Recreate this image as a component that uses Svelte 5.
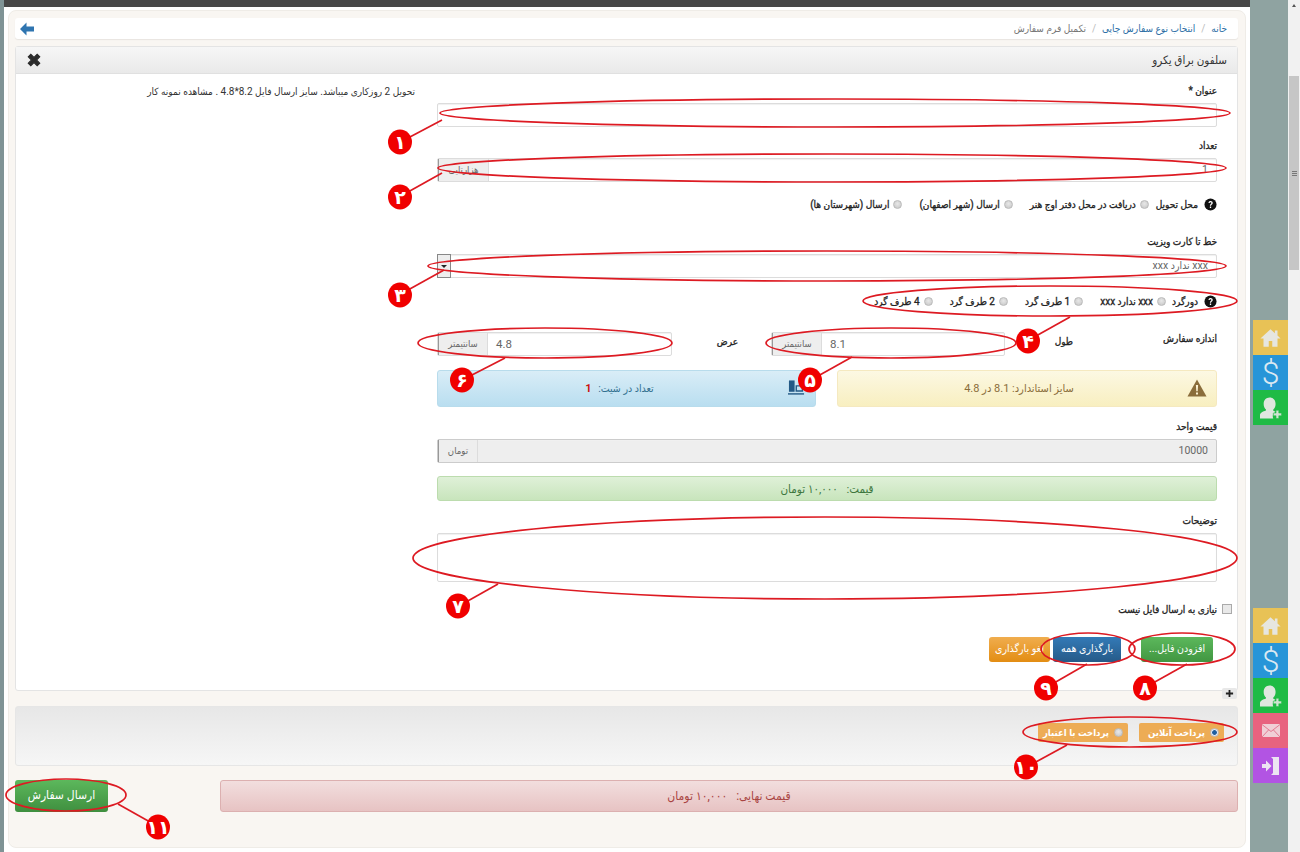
<script>
  const ellipses = [
    [835, 113, 395, 14], [832, 168, 394, 14], [827, 266, 399, 15], [1050, 301, 187, 15],
    [891, 343, 125, 15], [545, 343, 127, 15], [825, 558, 412, 41], [1182, 649, 53, 16],
    [1088, 649, 47, 16], [1130, 732, 107, 15], [66, 795, 60, 16]
  ];
  const lines = [
    [442, 120, 408, 138], [442, 173, 408, 192], [444, 270, 408, 290], [1070, 317, 1036, 336],
    [852, 357, 818, 376], [505, 358, 470, 376], [498, 584, 466, 602], [1187, 664, 1153, 683],
    [1087, 664, 1054, 683], [1067, 745, 1034, 763], [118, 804, 150, 822]
  ];
  const markers = [
    [400, 142, '۱'], [400, 197, '۲'], [400, 295, '۳'], [1028, 341, '۴'], [810, 380, '۵'], [462, 380, '۶'],
    [458, 606, '۷'], [1145, 688, '۸'], [1046, 688, '۹'], [1026, 767, '۱۰'], [158, 827, '۱۱']
  ];
  const edgeRounds = ['دورگرد', 'xxx ندارد xxx', '1 طرف گرد', '2 طرف گرد', '4 طرف گرد'];
  const delivery = ['دریافت در محل دفتر اوج هنر', 'ارسال (شهر اصفهان)', 'ارسال (شهرستان ها)'];
</script>

{#snippet homeIcon()}
  <svg class="tile-icon home" viewBox="0 0 24 24"><path d="M12 2.500 0.500 13H4v9.500h6V16h4v6.500h6V13h3.500L20 9.800V4h-3v3z" fill="#e6e6e0" /></svg>
{/snippet}
{#snippet dollarTile()}
  <span class="tile dollar">$</span>
{/snippet}
{#snippet userTile()}
  <span class="tile green-tile">
    <svg class="tile-icon" viewBox="0 0 24 24">
      <path d="M10.500 0.500c4 0 6.500 3 6.500 7 0 2.500-1 4.700-2.500 6v1.500l2.500 1.200A5.500 5.500 0 0 0 14.500 23.500H0v-4c0-2.200 3.200-3.600 6.500-4.800v-1.200C5 12.200 4 10 4 7.500c0-4 2.500-7 6.500-7z" fill="#dfe7df" />
      <path d="M17.500 14.500h3v3h3v3h-3v3h-3v-3h-3v-3h3z" fill="#cfe3d2" stroke="#1fbb45" stroke-width=".6" />
    </svg>
  </span>
{/snippet}

<div class="page">
  <div class="edge"></div>

  <div class="main">
    <div class="topbar"></div>
    <div class="card">
      <nav class="crumbs">
        <span class="link">خانه</span><span class="sep">/</span>
        <span class="link">انتخاب نوع سفارش چاپی</span><span class="sep">/</span>
        <span class="current">تکمیل فرم سفارش</span>
        <svg class="back" viewBox="0 0 16 14"><path d="M7.500 0.500 1 7l6.500 6.500V9.500H15v-5H7.500z" fill="#2f75b0" /></svg>
      </nav>

      <section class="panel">
        <header class="panel-head">
          <span>سلفون براق یکرو</span>
          <svg class="close" viewBox="0 0 14 14"><path d="M2 4.200 4.200 2 7 4.800 9.800 2 12 4.200 9.200 7 12 9.800 9.800 12 7 9.200 4.200 12 2 9.800 4.800 7z" fill="#2b2b2b" stroke="#2b2b2b" /></svg>
        </header>

        <div class="panel-body">
          <form class="form">
            <div class="label">عنوان *</div>
            <div class="input"></div>

            <div class="label gap-12">تعداد</div>
            <div class="input group">
              <span class="value">1</span>
              <span class="addon wide">هزارتایی</span>
            </div>

            <div class="radios first">
              <svg class="help" viewBox="0 0 14 14"><circle cx="7" cy="7" r="6.500" fill="#111" /><path d="M4.800 5.300C5 3.900 6 3.300 7.100 3.300c1.300 0 2.300.8 2.300 2 0 1.600-1.800 1.600-1.800 3H6.300c0-2.100 1.700-2.100 1.700-3 0-.5-.4-.8-.9-.8-.6 0-1 .3-1.100 1zM6.300 9.200h1.400v1.500H6.300z" fill="#fff" /></svg>
              <span class="caption">محل تحویل</span>
              {#each delivery as option}
                <label class="radio"><i class="dot"></i>{option}</label>
              {/each}
            </div>

            <div class="label gap-21">خط تا کارت ویزیت</div>
            <div class="input group select">
              <span class="value">xxx ندارد xxx</span>
              <span class="caret"><i></i></span>
            </div>

            <div class="radios second">
              <svg class="help" viewBox="0 0 14 14"><circle cx="7" cy="7" r="6.500" fill="#111" /><path d="M4.800 5.300C5 3.900 6 3.300 7.100 3.300c1.300 0 2.300.8 2.300 2 0 1.600-1.800 1.600-1.800 3H6.300c0-2.100 1.700-2.100 1.700-3 0-.5-.4-.8-.9-.8-.6 0-1 .3-1.100 1zM6.300 9.200h1.400v1.500H6.300z" fill="#fff" /></svg>
              <span class="caption short">{edgeRounds[0]}</span>
              {#each edgeRounds.slice(1) as option}
                <label class="radio"><i class="dot"></i>{option}</label>
              {/each}
            </div>

            <div class="size-row">
              <span class="size-label">اندازه سفارش</span>
              <span class="dim-label">طول</span>
              <div class="input group dim">
                <span class="value ltr">8.1</span>
                <span class="addon">سانتیمتر</span>
              </div>
              <span class="dim-label second-dim">عرض</span>
              <div class="input group dim last">
                <span class="value ltr">4.8</span>
                <span class="addon">سانتیمتر</span>
              </div>
            </div>

            <div class="alerts">
              <div class="alert warn">
                <svg class="warn-icon" viewBox="0 0 20 18"><path d="M10 .5 19.500 17.500H.5z" fill="#8a6d3b" /><path d="M8.900 6h2.200l-.4 6.300H9.300zM9 13.500h2v2H9z" fill="#fcf3d4" /></svg>
                <span>سایز استاندارد: 8.1 در 4.8</span>
              </div>
              <div class="alert info">
                <svg class="book-icon" viewBox="0 0 18 16"><path d="M1 0h6v12H1z" fill="#245a86" /><path d="M8 5h8v7H8zM9.500 6.500v4h5v-4z" fill="#245a86" /><path d="M0 13.500h17V15H0z" fill="#245a86" /></svg>
                <span>تعداد در شیت: <b class="count">1</b></span>
              </div>
            </div>

            <div class="label gap-13">قیمت واحد</div>
            <div class="input group disabled">
              <span class="value">10000</span>
              <span class="addon tall">تومان</span>
            </div>

            <div class="alert price">قیمت:&nbsp;&nbsp; ۱۰,۰۰۰ تومان</div>

            <div class="label gap-13">توضیحات</div>
            <div class="textarea"></div>

            <label class="check"><i class="box"></i><span>نیازی به ارسال فایل نیست</span></label>

            <div class="buttons">
              <span class="btn green">افزودن فایل...</span>
              <span class="btn blue">بارگذاری همه</span>
              <span class="btn orange">لغو بارگذاری</span>
            </div>
          </form>

          <p class="note">تحویل 2 روزکاری میباشد. سایز ارسال فایل 8.2*4.8 . مشاهده نمونه کار</p>
        </div>
        <span class="expand">
          <svg viewBox="0 0 10 10"><path d="M4 1h2v3h3v2H6v3H4V6H1V4h3z" fill="#222" /></svg>
        </span>
      </section>

      <section class="payment">
        <label class="pill first-pill"><i class="dot on"></i>پرداخت آنلاین</label>
        <label class="pill"><i class="dot"></i>پرداخت با اعتبار</label>
      </section>

      <div class="total-row">
        <div class="total">قیمت نهایی:&nbsp;&nbsp; ۱۰,۰۰۰ تومان</div>
        <span class="submit">ارسال سفارش</span>
      </div>
    </div>
  </div>

  <aside class="rail">
    <div class="tiles one">
      <span class="tile yellow">{@render homeIcon()}</span>
      {@render dollarTile()}
      {@render userTile()}
    </div>
    <div class="tiles two">
      <span class="tile yellow">{@render homeIcon()}</span>
      {@render dollarTile()}
      {@render userTile()}
      <span class="tile pink">
        <svg class="tile-icon mail" viewBox="0 0 18 13"><path d="M0 0h18v13H0z" fill="#f0cfd6" /><path d="M0 .5l9 7 9-7M0 13l6.500-7M18 13l-6.500-7" fill="none" stroke="#e0637f" stroke-width=".8" /></svg>
      </span>
      <span class="tile purple">
        <svg class="tile-icon door" viewBox="0 0 20 20"><path d="M10 1h8v18h-8l2-2V3z" fill="#ece4f2" /><path d="M1 8h4V4.500L10.500 10 5 15.500V12H1z" fill="#ece4f2" /></svg>
      </span>
    </div>
  </aside>

  <div class="scrollbar">
    <span class="arrow"></span>
    <span class="thumb"><i></i></span>
  </div>

  <svg class="marks" viewBox="0 0 1300 852">
    {#each ellipses as [cx, cy, rx, ry]}
      <ellipse {cx} {cy} {rx} {ry} fill="none" stroke="#dd1a22" stroke-width="1.700" />
    {/each}
    {#each lines as [x1, y1, x2, y2]}
      <line {x1} {y1} {x2} {y2} stroke="#dd1a22" stroke-width="1.700" />
    {/each}
    {#each markers as [cx, cy, n]}
      <ellipse {cx} {cy} rx="12" ry="12.500" fill="#f00000" />
      <text x={cx} y={cy + 7} class="mark-num" text-anchor="middle">{n}</text>
    {/each}
  </svg>
</div>

<style>
  :global(body) {
    margin: 0;
    background: #fff;
  }

  .page {
    position: relative;
    display: flex;
    width: 1300px;
    height: 852px;
    overflow: hidden;
    font: 10px Roboto, "DejaVu Sans Condensed", "DejaVu Sans", sans-serif;
    color: #333;
  }

  .edge {
    width: 4px;
    background: #7f9395;
  }

  .main {
    width: 1246px;
  }

  .topbar {
    height: 7px;
    background: #474747;
  }

  .card {
    box-sizing: border-box;
    height: 838px;
    margin: 3px 4px 0;
    padding: 7px 7px 0 6px;
    background: #f9f6f2;
    border: 1px solid #efece7;
    border-radius: 8px;
  }

  .crumbs {
    display: flex;
    align-items: center;
    direction: rtl;
    gap: 5px;
    height: 21px;
    padding: 0 11px 0 4px;
    background: #fff;
    border-radius: 3px;
    box-shadow: 0 1px 1px #e8e5e0;
    font-size: 10px;
  }

  .link {
    color: #2c6ea5;
  }

  .sep {
    color: #bbb;
    margin: 0 1px;
  }

  .current {
    color: #777;
  }

  .back {
    width: 16px;
    height: 14px;
    margin-right: auto;
  }

  .panel {
    position: relative;
    height: 645px;
    box-sizing: border-box;
    margin-top: 7px;
    background: #fff;
    border: 1px solid #e4e4e4;
    border-radius: 3px;
  }

  .panel-head {
    display: flex;
    align-items: center;
    justify-content: space-between;
    direction: rtl;
    height: 26px;
    padding: 0 10px;
    font-size: 11.500px;
    color: #333;
    background: linear-gradient(#f6f6f6, #e9e9e9);
    border-bottom: 1px solid #e0e0e0;
  }

  .close {
    width: 16px;
    height: 16px;
  }

  .panel-body {
    display: flex;
    direction: rtl;
    gap: 22px;
    padding: 10px 20px 0 0;
  }

  .form {
    width: 780px;
    flex: none;
  }

  .note {
    margin: 1px 0 0;
    font-size: 10px;
    line-height: 14px;
    color: #333;
    white-space: nowrap;
  }

  .label,
  .radios,
  .size-row,
  .check {
    font-size: 10px;
    color: #222;
    -webkit-text-stroke: 0.3px #222;
  }

  .label {
    height: 14px;
    margin-bottom: 5px;
    line-height: 14px;
  }

  .gap-12 { margin-top: 12px; }
  .gap-13 { margin-top: 13px; }
  .gap-21 { margin-top: 21px; }

  .input,
  .textarea {
    box-sizing: border-box;
    background: #fff;
    border: 1px solid #dcdcdc;
    border-radius: 2px;
    box-shadow: inset 0 1px 1px #f0f0f0;
  }

  .input {
    height: 24px;
  }

  .textarea {
    height: 49px;
  }

  .group {
    display: flex;
    align-items: stretch;
    color: #666;
    -webkit-text-stroke: 0;
  }

  .value {
    flex: 1;
    padding: 0 8px;
    line-height: 22px;
    font-size: 10.500px;
  }

  .value.ltr {
    direction: ltr;
    text-align: left;
    font-size: 11.500px;
  }

  .addon {
    width: 48px;
    text-align: center;
    line-height: 22px;
    font-size: 9.500px;
    color: #666;
    background: #eee;
    border-right: 1px solid #dcdcdc;
    border-left: 1px solid #999;
  }

  .addon.wide {
    width: 49px;
  }

  .addon.tall {
    width: 38px;
  }

  .disabled {
    background: #eee;
    border-color: #ccc;
  }

  .caret {
    display: flex;
    align-items: center;
    justify-content: center;
    width: 12px;
    background: #eee;
    border: 1px solid #888;
    margin: -1px 0 -1px -1px;
  }

  .caret i {
    border: 3px solid transparent;
    border-top: 3px solid #222;
    border-bottom: 0;
  }

  .radios {
    display: flex;
    align-items: center;
    height: 20px;
    white-space: nowrap;
  }

  .first {
    margin-top: 12px;
  }

  .second {
    margin-top: 13px;
  }

  .help {
    width: 13px;
    height: 13px;
    margin-left: 6px;
    flex: none;
  }

  .caption {
    margin-left: 7px;
  }

  .caption.short {
    margin-left: 6px;
  }

  .radio {
    display: flex;
    align-items: center;
    gap: 4px;
    margin-left: 17px;
  }

  .dot {
    display: inline-block;
    box-sizing: border-box;
    width: 9px;
    height: 9px;
    border-radius: 50%;
    background: radial-gradient(circle at 50% 40%, #e8e8e8, #c4c4c4);
    border: 1px solid #bbb;
    flex: none;
  }

  .dot.on {
    background: radial-gradient(circle, #1f5f9e 40%, #dfe8f2 55%);
  }

  .size-row {
    display: flex;
    align-items: flex-start;
    margin-top: 21px;
    height: 24px;
  }

  .size-label {
    width: 144px;
    line-height: 14px;
  }

  .dim-label {
    width: 68px;
    line-height: 20px;
  }

  .second-dim {
    width: 99px;
    padding-right: 33px;
    box-sizing: border-box;
    line-height: 20px;
  }

  .dim {
    width: 234px;
  }

  .dim.last {
    width: 235px;
  }

  .alerts {
    display: flex;
    justify-content: space-between;
    margin-top: 14px;
  }

  .alert {
    box-sizing: border-box;
    border-radius: 3px;
    font-size: 10px;
  }

  .warn,
  .info {
    position: relative;
    display: flex;
    align-items: center;
    justify-content: center;
    height: 37px;
  }

  .warn {
    width: 380px;
    padding-right: 16px;
    font-size: 11px;
    color: #8a6d3b;
    background: linear-gradient(#fcf8e3, #f8efc0);
    border: 1px solid #f5e9c0;
  }

  .info {
    width: 379px;
    padding-right: 14px;
    font-size: 10.500px;
    color: #31708f;
    background: linear-gradient(#d9edf7, #b9def0);
    border: 1px solid #b8dcec;
  }

  .warn-icon {
    position: absolute;
    right: 9px;
    top: 8px;
    width: 20px;
    height: 18px;
  }

  .book-icon {
    position: absolute;
    right: 10px;
    top: 9px;
    width: 17px;
    height: 16px;
  }

  .count {
    margin-right: 4px;
    color: #cc1111;
    font-family: Roboto, sans-serif;
    font-size: 11px;
  }

  .price {
    height: 25px;
    margin-top: 13px;
    line-height: 25px;
    text-align: center;
    font-size: 11.500px;
    color: #3c763d;
    background: linear-gradient(#dff0d8, #c8e5bc);
    border: 1px solid #bcdcae;
  }

  .check {
    display: flex;
    align-items: center;
    gap: 5px;
    height: 18px;
    margin: 18px -15px 0 0;
  }

  .box {
    width: 8px;
    height: 8px;
    background: #e9e9e9;
    border: 1px solid #aaa;
  }

  .buttons {
    display: flex;
    gap: 3px;
    margin: 19px 4px 0 0;
  }

  .btn {
    box-sizing: border-box;
    height: 25px;
    line-height: 24px;
    text-align: center;
    font-size: 10.500px;
    color: #fff;
    border-radius: 3px;
    white-space: nowrap;
    overflow: hidden;
  }

  .green {
    width: 72px;
    margin-left: 17px;
    background: linear-gradient(#5cb85c, #419641);
  }

  .blue {
    width: 68px;
    background: linear-gradient(#337ab7, #265a88);
  }

  .orange {
    width: 61px;
    background: linear-gradient(#f0ad4e, #e38d13);
  }

  .expand {
    position: absolute;
    left: 1206px;
    bottom: -9px;
    display: flex;
    align-items: center;
    justify-content: center;
    width: 15px;
    height: 11px;
    background: #e8e8e8;
    border-radius: 2px;
  }

  .expand svg {
    width: 9px;
    height: 9px;
  }

  .payment {
    display: flex;
    direction: rtl;
    gap: 11px;
    box-sizing: border-box;
    height: 60px;
    margin-top: 15px;
    padding: 16px 13px 0 0;
    background: linear-gradient(#e7e7e7, #f6f6f6);
    border: 1px solid #e6e6e6;
    border-radius: 3px;
  }

  .pill {
    display: flex;
    align-items: center;
    gap: 5px;
    box-sizing: border-box;
    width: 90px;
    height: 19px;
    padding: 0 5px;
    font-size: 9.500px;
    font-weight: 600;
    color: #fff;
    background: #edac55;
    border-radius: 2px;
    white-space: nowrap;
  }

  .first-pill {
    width: 85px;
  }

  .total-row {
    display: flex;
    direction: rtl;
    justify-content: space-between;
    margin-top: 14px;
  }

  .total {
    box-sizing: border-box;
    width: 1018px;
    height: 32px;
    line-height: 30px;
    text-align: center;
    font-size: 12px;
    color: #a94442;
    background: linear-gradient(#f2dede, #e7c3c3);
    border: 1px solid #dcb0b0;
    border-radius: 3px;
  }

  .submit {
    width: 93px;
    height: 32px;
    line-height: 31px;
    text-align: center;
    font-size: 12px;
    color: #fff;
    background: linear-gradient(#5cb85c, #3f8f3f);
    border-radius: 3px;
  }

  .rail {
    width: 38px;
    padding-left: 3px;
    box-sizing: border-box;
    background: #8fa3a1;
  }

  .tiles {
    display: flex;
    flex-direction: column;
  }

  .one {
    margin-top: 320px;
  }

  .two {
    margin-top: 183px;
  }

  .tile {
    display: flex;
    align-items: center;
    justify-content: center;
    width: 35px;
    height: 35px;
  }

  .yellow { background: #e8c256; }
  .dollar {
    background: #2795d8;
    color: #dbe9f2;
    font: 300 32px Roboto, sans-serif;
  }
  .green-tile { background: #1fbb45; }
  .pink { background: #e8637f; }
  .purple { background: #b254e3; }

  .tile-icon {
    width: 22px;
    height: 22px;
  }

  .tile-icon.home {
    width: 21px;
    height: 21px;
  }

  .tile-icon.mail {
    width: 18px;
    height: 13px;
  }

  .tile-icon.door {
    width: 20px;
    height: 20px;
  }

  .scrollbar {
    position: relative;
    width: 12px;
    background: #f1f1f1;
  }

  .arrow {
    position: absolute;
    top: 4px;
    left: 4px;
    border: 2px solid transparent;
    border-bottom: 3px solid #555;
    border-top: 0;
  }

  .thumb {
    position: absolute;
    top: 76px;
    left: 1px;
    display: flex;
    align-items: center;
    justify-content: center;
    width: 10px;
    height: 194px;
    background: #c6c6c6;
  }

  .thumb i {
    width: 5px;
    height: 5px;
    background: repeating-linear-gradient(#777 0 1px, transparent 1px 2px);
  }

  .marks {
    position: absolute;
    top: 0;
    left: 0;
    width: 1300px;
    height: 852px;
    pointer-events: none;
  }

  .mark-num {
    font: bold 19px "DejaVu Sans", sans-serif;
    fill: #fff;
  }
</style>
